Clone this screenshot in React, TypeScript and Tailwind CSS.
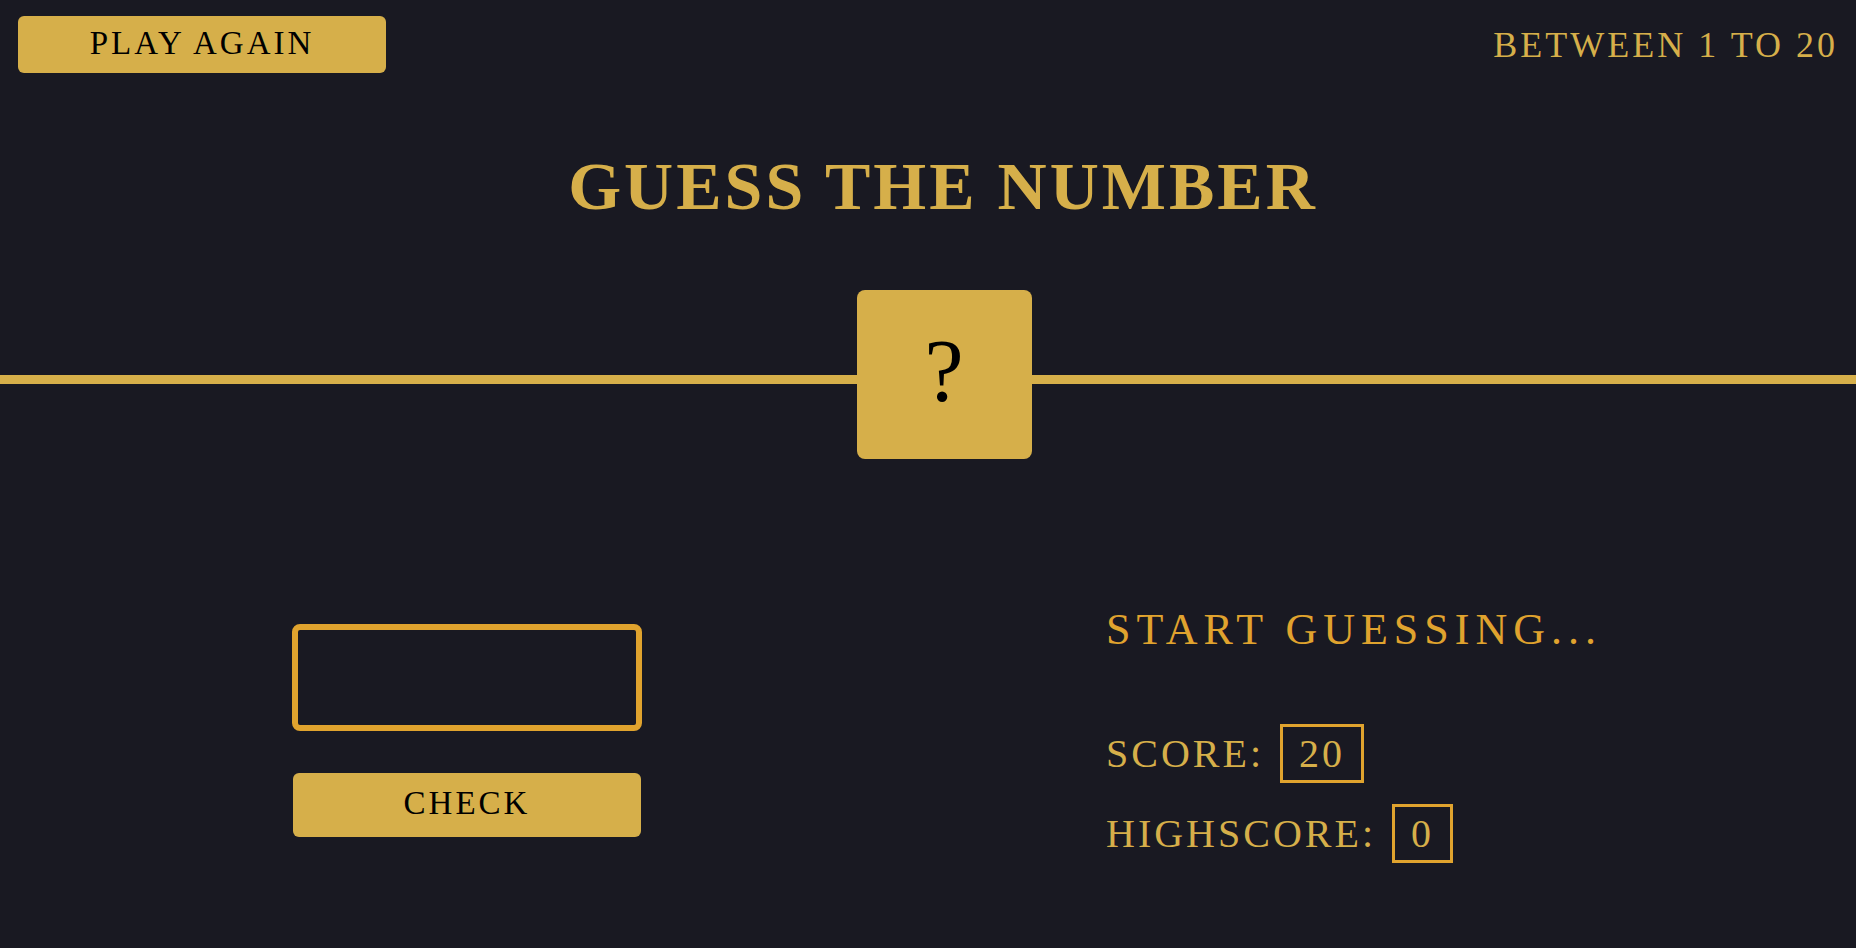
import { useState } from "react";
import type { FormEvent } from "react";

const START_SCORE = 20;

function pickSecret() {
  return Math.floor(Math.random() * 20) + 1;
}

function Stat({ label, value }: { label: string; value: number }) {
  return (
    <p className="flex items-center gap-4 text-[40px] leading-[53px]">
      <span>{label}</span>
      <span className="border-[3px] border-[#e0a32e] px-4">{value}</span>
    </p>
  );
}

export default function App() {
  const [secret, setSecret] = useState(pickSecret);
  const [guess, setGuess] = useState("");
  const [message, setMessage] = useState("START GUESSING...");
  const [score, setScore] = useState(START_SCORE);
  const [highscore, setHighscore] = useState(0);
  const [solved, setSolved] = useState(false);

  function restart() {
    setSecret(pickSecret());
    setGuess("");
    setMessage("START GUESSING...");
    setScore(START_SCORE);
    setSolved(false);
  }

  function check(event: FormEvent) {
    event.preventDefault();
    if (solved || score === 0) return;
    const value = Number(guess);
    if (!value) {
      setMessage("NO NUMBER!");
    } else if (value === secret) {
      setMessage("CORRECT NUMBER!");
      setSolved(true);
      setHighscore(Math.max(score, highscore));
    } else {
      setMessage(score === 1 ? "YOU LOST!" : value > secret ? "TOO HIGH!" : "TOO LOW!");
      setScore(score - 1);
    }
  }

  return (
    <div className="min-h-screen bg-[#191922] font-['Liberation_Serif',serif] tracking-[3px] text-[#d6af4a]">
      <header className="flex items-start justify-between px-[18px] pt-4">
        <button
          type="button"
          onClick={restart}
          className="w-[368px] rounded-md bg-[#d6af4a] pb-0.5 text-[33px] leading-[55px] tracking-[3px] text-black"
        >
          PLAY AGAIN
        </button>
        <p className="text-4xl leading-[58px]">BETWEEN 1 TO 20</p>
      </header>

      <h1 className="mt-[70px] pl-[30px] text-center text-[68px] leading-[84px] font-bold">
        GUESS THE NUMBER
      </h1>

      <div className="mt-[62px] flex items-center">
        <div className="mt-2.5 h-[9px] grow basis-8 bg-[#d6af4a]" />
        <div className="flex h-[169px] w-[175px] items-center justify-center rounded-lg bg-[#d6af4a] pb-2 text-[88px] leading-none tracking-normal text-black">
          {solved ? secret : "?"}
        </div>
        <div className="mt-2.5 h-[9px] grow basis-0 bg-[#d6af4a]" />
      </div>

      <main className="grid grid-cols-2 pt-[141px] pb-20">
        <form onSubmit={check} className="flex flex-col items-center pt-6 pl-1.5">
          <input
            type="number"
            aria-label="Your guess"
            value={guess}
            onChange={(event) => setGuess(event.target.value)}
            className="h-[107px] w-[350px] rounded-lg border-[6px] border-[#e0a32e] bg-transparent text-center text-5xl outline-none"
          />
          <button
            type="submit"
            className="mt-[42px] w-[348px] rounded-md bg-[#d6af4a] pb-1 text-[33px] leading-[60px] tracking-[3px] text-black"
          >
            CHECK
          </button>
        </form>

        <section className="pl-[178px]">
          <p className="text-[44px] leading-[60px] tracking-[6px] text-[#e0a32e]">{message}</p>
          <div className="mt-16 flex flex-col gap-[21px]">
            <Stat label="SCORE:" value={score} />
            <Stat label="HIGHSCORE:" value={highscore} />
          </div>
        </section>
      </main>
    </div>
  );
}
